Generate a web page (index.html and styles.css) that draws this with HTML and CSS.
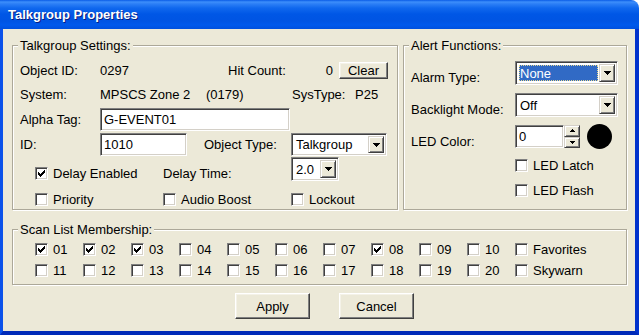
FILE: index.html
```html
<!DOCTYPE html>
<html>
<head>
    <title>Talkgroup Properties</title>
    <link rel="stylesheet" href="styles.css">
</head>
<body>
<div class="window">
    <div class="titlebar">Talkgroup Properties</div>
    <div class="client">
        <div class="top">
            <div class="group settings">
                <div class="group-title">Talkgroup Settings:</div>
                <div class="row r1">
                    <span class="w80">Object ID:</span>
                    <span class="w128">0297</span>
                    <span class="w88">Hit Count:</span>
                    <span class="count">0</span>
                    <button class="btn clear">Clear</button>
                </div>
                <div class="row r2">
                    <span class="w80">System:</span>
                    <span class="w106">MPSCS Zone 2</span>
                    <span class="w86">(0179)</span>
                    <span class="w63">SysType:</span>
                    <span>P25</span>
                </div>
                <div class="row r3">
                    <span class="w80">Alpha Tag:</span>
                    <div class="field alpha">G-EVENT01</div>
                </div>
                <div class="row r4">
                    <span class="w80">ID:</span>
                    <div class="field idbox">1010</div>
                    <span class="objtype">Object Type:</span>
                    <div class="combo objcombo">
                        <span class="val">Talkgroup</span>
                        <span class="drop"><svg width="7" height="4" viewBox="0 0 7 4"><path d="M0 0h7v1h-7z M1 1h5v1h-5z M2 2h3v1h-3z M3 3h1v1h-1z"/></svg></span>
                    </div>
                </div>
                <div class="row r5">
                    <span class="check low"><span class="box"><svg width="7" height="7" viewBox="0 0 7 7"><path d="M6 0h1v1h-1z M5 1h2v1h-2z M0 2h1v1h-1z M4 2h3v1h-3z M0 3h2v1h-2z M3 3h3v1h-3z M0 4h5v1h-5z M1 5h3v1h-3z M2 6h1v1h-1z"/></svg></span>Delay Enabled</span>
                    <span class="w128 low">Delay Time:</span>
                    <div class="combo delay">
                        <span class="val">2.0</span>
                        <span class="drop"><svg width="7" height="4" viewBox="0 0 7 4"><path d="M0 0h7v1h-7z M1 1h5v1h-5z M2 2h3v1h-3z M3 3h1v1h-1z"/></svg></span>
                    </div>
                </div>
                <div class="row r6">
                    <span class="check"><span class="box"></span>Priority</span>
                    <span class="check"><span class="box"></span>Audio Boost</span>
                    <span class="check"><span class="box"></span>Lockout</span>
                </div>
            </div>

            <div class="group alerts">
                <div class="group-title">Alert Functions:</div>
                <div class="row a1">
                    <span class="alabel">Alarm Type:</span>
                    <div class="combo acombo">
                        <span class="val selected"><span class="focus">None</span></span>
                        <span class="drop"><svg width="7" height="4" viewBox="0 0 7 4"><path d="M0 0h7v1h-7z M1 1h5v1h-5z M2 2h3v1h-3z M3 3h1v1h-1z"/></svg></span>
                    </div>
                </div>
                <div class="row a2">
                    <span class="alabel">Backlight Mode:</span>
                    <div class="combo acombo">
                        <span class="val">Off</span>
                        <span class="drop"><svg width="7" height="4" viewBox="0 0 7 4"><path d="M0 0h7v1h-7z M1 1h5v1h-5z M2 2h3v1h-3z M3 3h1v1h-1z"/></svg></span>
                    </div>
                </div>
                <div class="row a3">
                    <span class="alabel led">LED Color:</span>
                    <div class="field spinval">0</div>
                    <div class="spin">
                        <span class="sbtn up"><svg width="5" height="3" viewBox="0 0 5 3"><path d="M2 0h1v1h-1z M1 1h3v1h-3z M0 2h5v1h-5z"/></svg></span>
                        <span class="sbtn dn"><svg width="5" height="3" viewBox="0 0 5 3"><path d="M0 0h5v1h-5z M1 1h3v1h-3z M2 2h1v1h-1z"/></svg></span>
                    </div>
                    <span class="dot"></span>
                </div>
                <div class="row a4">
                    <span class="check"><span class="box"></span>LED Latch</span>
                </div>
                <div class="row a5">
                    <span class="check"><span class="box"></span>LED Flash</span>
                </div>
            </div>
        </div>

        <div class="group scan">
            <div class="group-title">Scan List Membership:</div>
            <div class="row s1">
                <span class="check sc"><span class="box"><svg width="7" height="7" viewBox="0 0 7 7"><path d="M6 0h1v1h-1z M5 1h2v1h-2z M0 2h1v1h-1z M4 2h3v1h-3z M0 3h2v1h-2z M3 3h3v1h-3z M0 4h5v1h-5z M1 5h3v1h-3z M2 6h1v1h-1z"/></svg></span>01</span>
                <span class="check sc"><span class="box"><svg width="7" height="7" viewBox="0 0 7 7"><path d="M6 0h1v1h-1z M5 1h2v1h-2z M0 2h1v1h-1z M4 2h3v1h-3z M0 3h2v1h-2z M3 3h3v1h-3z M0 4h5v1h-5z M1 5h3v1h-3z M2 6h1v1h-1z"/></svg></span>02</span>
                <span class="check sc"><span class="box"><svg width="7" height="7" viewBox="0 0 7 7"><path d="M6 0h1v1h-1z M5 1h2v1h-2z M0 2h1v1h-1z M4 2h3v1h-3z M0 3h2v1h-2z M3 3h3v1h-3z M0 4h5v1h-5z M1 5h3v1h-3z M2 6h1v1h-1z"/></svg></span>03</span>
                <span class="check sc"><span class="box"></span>04</span>
                <span class="check sc"><span class="box"></span>05</span>
                <span class="check sc"><span class="box"></span>06</span>
                <span class="check sc"><span class="box"></span>07</span>
                <span class="check sc"><span class="box"><svg width="7" height="7" viewBox="0 0 7 7"><path d="M6 0h1v1h-1z M5 1h2v1h-2z M0 2h1v1h-1z M4 2h3v1h-3z M0 3h2v1h-2z M3 3h3v1h-3z M0 4h5v1h-5z M1 5h3v1h-3z M2 6h1v1h-1z"/></svg></span>08</span>
                <span class="check sc"><span class="box"></span>09</span>
                <span class="check sc"><span class="box"></span>10</span>
                <span class="check sc"><span class="box"></span>Favorites</span>
            </div>
            <div class="row s2">
                <span class="check sc"><span class="box"></span>11</span>
                <span class="check sc"><span class="box"></span>12</span>
                <span class="check sc"><span class="box"></span>13</span>
                <span class="check sc"><span class="box"></span>14</span>
                <span class="check sc"><span class="box"></span>15</span>
                <span class="check sc"><span class="box"></span>16</span>
                <span class="check sc"><span class="box"></span>17</span>
                <span class="check sc"><span class="box"></span>18</span>
                <span class="check sc"><span class="box"></span>19</span>
                <span class="check sc"><span class="box"></span>20</span>
                <span class="check sc"><span class="box"></span>Skywarn</span>
            </div>
        </div>

        <div class="actions">
            <button class="btn big">Apply</button>
            <button class="btn big">Cancel</button>
        </div>
    </div>
</div>
</body>
</html>
```

FILE: styles.css
```css
body { margin: 0; background: #fff; font-family: "Liberation Sans", Arial, sans-serif; font-size: 13px; line-height: 15px; color: #000; }

/* window frame */
.window { width: 639px; height: 335px; display: flex; flex-direction: column; }
.titlebar { height: 29px; flex: none; box-sizing: border-box; padding: 7px 0 0 8px; color: #fff; font-weight: bold; font-size: 13px; text-shadow: 1px 1px #0a1e80; border-radius: 0 8px 0 0; background: linear-gradient(#0a5ce6 0, #3d8ffb 2px, #2b7ef6 4px, #1068ee 8px, #0057e6 14px, #0054e3 21px, #0059ec 25px, #0050de 29px); }
.client { flex: 1; background: #ece9d8; border-style: solid; border-width: 0 4px 4px 3px; border-color: #0b4de4 #0032cc #002ab8 #0b52ea; padding: 16px 0 0 9px; }

/* group boxes */
.top { display: flex; gap: 5px; }
.group { box-sizing: border-box; border: 1px solid #aca899; box-shadow: inset 1px 1px #fff, 1px 1px #fff; }
.group-title { width: fit-content; margin: -8px 0 0 -2px; padding: 0 2px; background: #ece9d8; }
.settings { width: 386px; height: 165px; padding-left: 7px; }
.alerts { width: 224px; height: 165px; padding-left: 7px; }
.scan { width: 615px; height: 56px; margin-top: 19px; padding-left: 22px; }
.scan .group-title { margin-left: -17px; }

.row { display: flex; align-items: center; }
.row > * { flex: none; }
.w80 { width: 80px; }
.w86 { width: 86px; }
.w88 { width: 88px; }
.w106 { width: 106px; }
.w63 { width: 63px; }
.w128 { width: 128px; }
.count { width: 17px; text-align: right; margin-right: 6px; }

.r1 { height: 18px; margin-top: 8px; }
.r2 { height: 18px; margin-top: 6px; }
.r3 { height: 23px; margin-top: 5px; }
.r4 { height: 23px; margin-top: 2px; }
.r5 { height: 24px; margin-top: 1px; padding-left: 15px; }
.r6 { height: 14px; margin-top: 11px; padding-left: 15px; }
.low { margin-top: 8px; }

/* sunken fields */
.field, .combo { box-sizing: border-box; background: #fff; border: 1px solid; border-color: #808080 #fff #fff #808080; box-shadow: inset 1px 1px #404040, inset -1px -1px #d4d0c8; }
.field { display: flex; align-items: center; height: 23px; padding: 0 0 0 3px; }
.alpha { width: 190px; }
.idbox { width: 87px; }
.objtype { width: 87px; margin-left: 17px; }

.combo { display: flex; padding: 2px; }
.combo .val { flex: 1; display: flex; align-items: center; padding-left: 2px; }
.drop, .sbtn { box-sizing: border-box; display: flex; align-items: center; justify-content: center; background: #ece9d8; border: 1px solid; border-color: #d4d0c8 #404040 #404040 #d4d0c8; box-shadow: inset 1px 1px #fff, inset -1px -1px #808080; }
.drop { width: 16px; }
.objcombo { width: 96px; height: 23px; }
.delay { width: 48px; height: 24px; }
.acombo { width: 103px; height: 24px; }
.val.selected { padding: 1px; }
.focus { flex: 1; align-self: stretch; display: flex; align-items: center; padding-left: 1px; background: #316ac5; color: #fff; outline: 1px dotted #e8d890; outline-offset: -1px; }

/* buttons */
.btn { box-sizing: border-box; font: inherit; color: #000; background: #ece9d8; border: 1px solid; border-color: #fff #404040 #404040 #fff; box-shadow: inset -1px -1px #808080, inset 1px 1px #f4f2e8; padding: 0; }
.clear { width: 49px; height: 17px; }
.big { width: 75px; height: 26px; }

/* check boxes */
.check { display: flex; align-items: center; gap: 5px; width: 128px; white-space: nowrap; }
.box { box-sizing: border-box; width: 13px; height: 13px; flex: none; display: flex; align-items: center; justify-content: center; background: #fff; border: 1px solid; border-color: #808080 #fff #fff #808080; box-shadow: inset 1px 1px #404040, inset -1px -1px #d4d0c8; }
.box svg { shape-rendering: crispEdges; }
.sc { width: 48px; }
.s1 { height: 13px; margin-top: 6px; }
.s2 { height: 13px; margin-top: 8px; }

/* alert functions */
.alabel { width: 104px; margin-top: 8px; }
.a1 { height: 24px; margin-top: 8px; }
.a2 { height: 24px; margin-top: 8px; }
.a3 { height: 23px; margin-top: 8px; }
.a4 { height: 13px; margin-top: 11px; padding-left: 104px; }
.a5 { height: 13px; margin-top: 12px; padding-left: 104px; }
.led { margin-top: 9px; }
.spinval { width: 49px; }
.spin { display: flex; flex-direction: column; width: 16px; height: 23px; }
.sbtn { flex: 1; }
.dot { width: 25px; height: 25px; border-radius: 50%; background: #000; margin-left: 7px; }

.actions { display: flex; gap: 29px; margin-top: 8px; padding-left: 223px; }
svg { display: block; }
```
